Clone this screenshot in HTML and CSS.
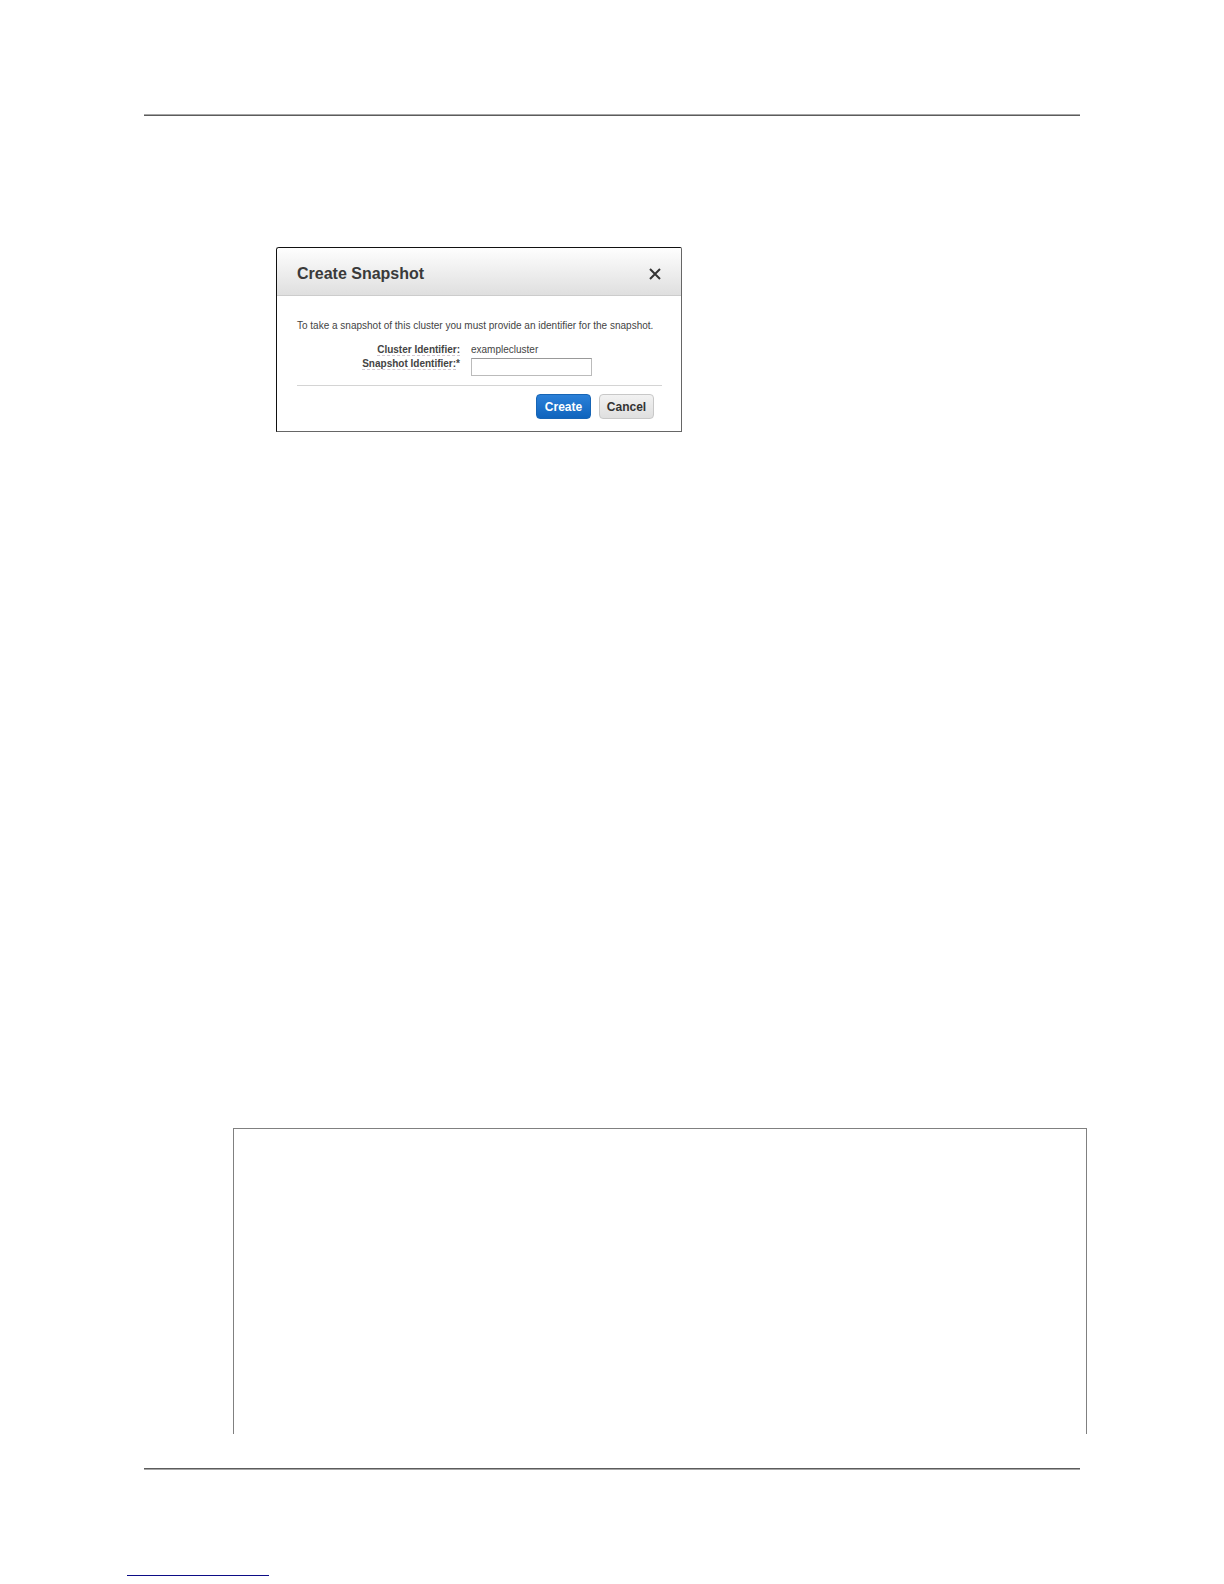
FILE: index.html
```
<!DOCTYPE html>
<html lang="en">
<head>
<meta charset="utf-8">
<title>Create Snapshot</title>
<link rel="stylesheet" href="styles.css">
</head>
<body>
<hr class="rule rule-top">
<main class="content">
  <section class="dialog" role="dialog" aria-labelledby="dialog-title">
    <header class="dialog-header">
      <h1 class="dialog-title" id="dialog-title">Create Snapshot</h1>
      <button class="close" type="button" aria-label="Close">
        <svg width="12" height="12" viewBox="0 0 12 12" aria-hidden="true"><path d="M1 1L11 11M11 1L1 11" stroke="#333" stroke-width="2" fill="none"/></svg>
      </button>
    </header>
    <form class="dialog-body">
      <p class="intro">To take a snapshot of this cluster you must provide an identifier for the snapshot.</p>
      <div class="fields">
        <span class="label"><span class="term">Cluster Identifier:</span></span>
        <span class="value">examplecluster</span>
        <label class="label" for="snapshot-id"><span class="term">Snapshot Identifier:</span>*</label>
        <input class="text-input" id="snapshot-id" type="text">
      </div>
      <div class="actions">
        <button class="button primary" type="button">Create</button>
        <button class="button" type="button">Cancel</button>
      </div>
    </form>
  </section>
  <div class="frame"></div>
</main>
<hr class="rule rule-bottom">
<footer class="footer"><a class="footer-link" href="#dialog-title" aria-label="Back to top"></a></footer>
</body>
</html>
```
FILE: styles.css
```
* { box-sizing: border-box; }

body {
  margin: 0;
  padding: 114px 0 8px;
  background: #fff;
  color: #444;
  font: 10px/14px "Liberation Sans", Arial, sans-serif;
}

.rule {
  height: 2px;
  margin: 0 144px;
  border: 0;
}

.rule-top {
  border-top: 1px solid #a6a6a6;
  border-bottom: 1px solid #5c5c5c;
}

.rule-bottom {
  border-top: 1px solid #5c5c5c;
  border-bottom: 1px solid #a6a6a6;
}

.content {
  margin: 0 137px 34px 233px;
  padding-top: 131px;
}

.dialog {
  width: 406px;
  margin-left: 43px;
  border: 1px solid #666;
  border-top-color: #111;
  border-left-color: #111;
  border-radius: 3px 2px 0 0;
}

.dialog-header {
  display: flex;
  align-items: center;
  justify-content: space-between;
  height: 48px;
  padding: 4px 20px 0;
  border-bottom: 1px solid #ccc;
  border-radius: 2px 2px 0 0;
  background: linear-gradient(#fefefe, #dfdfdf);
}

.dialog-title {
  margin: 0;
  color: #3a3a3a;
  font-size: 16px;
  line-height: 20px;
}

.close {
  display: flex;
  padding: 0;
  border: 0;
  background: none;
}

.dialog-body {
  padding: 23px 19px 12px 20px;
}

.intro {
  margin: 0 0 10px;
  white-space: nowrap;
}

.fields {
  display: grid;
  grid-template-columns: 163px 121px;
  column-gap: 11px;
  padding-bottom: 9px;
  border-bottom: 1px solid #d4d4d4;
}

.label {
  font-weight: bold;
  text-align: right;
}

.term {
  border-bottom: 1px dashed #d2c8d2;
}

.text-input {
  width: 121px;
  height: 18px;
  margin-top: 1px;
  padding: 0 2px;
  border: 1px solid #bbb;
  border-top-color: #999;
  font: inherit;
}

.actions {
  display: flex;
  justify-content: flex-end;
  gap: 8px;
  padding: 8px 8px 0 0;
}

.button {
  width: 55px;
  height: 25px;
  padding: 0;
  border: 1px solid #c8c8c8;
  border-radius: 4px;
  background: linear-gradient(#f2f2f2, #dfdfdf);
  color: #333;
  font: bold 12px/14px "Liberation Sans", Arial, sans-serif;
}

.primary {
  border-color: #1765b5;
  background: linear-gradient(#2b80d8, #0f64bd);
  color: #fff;
}

.frame {
  height: 306px;
  margin-top: 696px;
  border: 1px solid #808080;
  border-bottom: 0;
}

.footer {
  padding: 105px 127px 0;
}

.footer-link {
  display: block;
  width: 142px;
  border-bottom: 1px solid #0c0c86;
}
```
